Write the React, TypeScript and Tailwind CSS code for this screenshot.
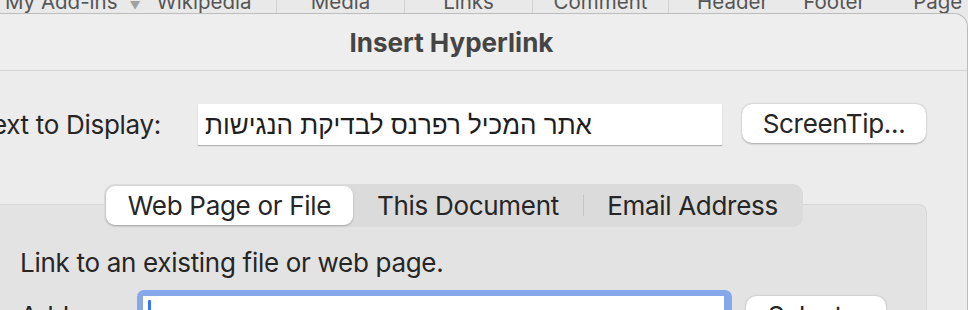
import React from "react";

const ribbonTabs = [
  { w: 128, label: "Media" },
  { w: 128, label: "Links" },
  { w: 136, label: "Comment" },
];

export default function App() {
  return (
    <div className="w-[968px] h-[310px] overflow-hidden bg-[#e9e9e9] font-['Inter','Liberation_Sans',sans-serif] text-[#262626]">
      {/* Ribbon strip behind the sheet */}
      <div className="h-[13px] flex text-[20.5px] leading-[22px] text-[#555555] overflow-hidden">
        <div className="w-[277px] shrink-0 border-r border-[#d2d2d2] flex items-start">
          <span className="ml-[5px] -mt-[9px]">My Add-ins</span>
          <span className="ml-[12px] -mt-[6px] text-[11px] text-[#a0a0a0]">▼</span>
          <span className="ml-[16px] -mt-[9px]">Wikipedia</span>
        </div>
        {ribbonTabs.map((r) => (
          <div
            key={r.label}
            className="shrink-0 border-r border-[#d2d2d2] flex justify-center items-start"
            style={{ width: r.w }}
          >
            <span className="-mt-[9px]">{r.label}</span>
          </div>
        ))}
        <div className="flex items-start">
          <span className="ml-[28px] -mt-[9px]">Header</span>
          <span className="ml-[35px] -mt-[9px]">Footer</span>
          <span className="ml-[48px] -mt-[9px]">Page</span>
        </div>
      </div>

      {/* Dialog sheet */}
      <div className="-ml-[64px] w-[1032px] h-[400px] bg-[#ececec] border-t border-r border-[#bcbcbc] rounded-tr-[14px]">
        {/* Title bar */}
        <div className="h-[57px] bg-[#eeeeee] border-b border-[#d4d4d4] rounded-tr-[14px] flex items-center justify-center">
          <span className="text-[26px] font-bold text-[#454545] leading-[32px] mt-[1px]">
            Insert Hyperlink
          </span>
        </div>

        {/* Body */}
        <div className="pl-[64px] pt-[33px] text-[26px] leading-[32px] tracking-[-0.3px]">
          <div className="flex items-start">
            <div className="w-[161px] shrink-0 flex justify-end h-[41px] items-center">
              <span className="shrink-0 whitespace-nowrap">Text to Display:</span>
            </div>
            <div className="ml-[37px] w-[524px] h-[41px] bg-white shadow-[0_1px_1px_rgba(0,0,0,0.25)] flex items-center pl-[7px]">
              <span className="font-['Liberation_Sans',sans-serif] tracking-normal text-[#1e1e1e]">
                אתר המכיל רפרנס לבדיקת הנגישות
              </span>
            </div>
            <button className="ml-[20px] w-[184px] h-[39px] bg-white rounded-[10px] shadow-[0_0.5px_2px_rgba(0,0,0,0.3)] text-[#262626]">
              ScreenTip...
            </button>
          </div>

          {/* Segmented tabs */}
          <div className="relative z-10 mt-[39px] ml-[104px] w-[699px] h-[43px] bg-[#dbdbdb] rounded-[10px] p-[2px] flex items-stretch">
            <div className="w-[247px] bg-white rounded-[9px] shadow-[0_1px_2px_rgba(0,0,0,0.25)] flex items-center justify-center">
              Web Page or File
            </div>
            <div className="w-[230px] flex items-center justify-center">This Document</div>
            <div className="w-px my-[9px] bg-[#c4c4c4]" />
            <div className="w-[217px] flex items-center justify-center">Email Address</div>
          </div>

          {/* Tab pane */}
          <div className="-mt-[23px] -ml-[20px] w-[947px] h-[200px] bg-[#e3e3e3] border border-[#d8d8d8] rounded-[8px] pt-[42px] pl-[39px]">
            <div>Link to an existing file or web page.</div>
            <div className="flex items-start mt-[11px]">
              <span className="mt-[10px] w-[98px] shrink-0">Address:</span>
              <div className="ml-[19px] w-[595px] h-[50px] bg-[#86a8ea] rounded-[7px] pt-[6px] pl-[6px] pr-[8px]">
                <div className="h-full bg-white pt-[4px] pl-[5px]">
                  <div className="w-[3px] h-[26px] bg-[#3478f6] rounded-[1px]" />
                </div>
              </div>
              <button className="ml-[14px] mt-[6px] w-[140px] h-[39px] bg-white rounded-[10px] shadow-[0_0.5px_2px_rgba(0,0,0,0.3)] text-[#262626]">
                Select...
              </button>
            </div>
          </div>
        </div>
      </div>
    </div>
  );
}
